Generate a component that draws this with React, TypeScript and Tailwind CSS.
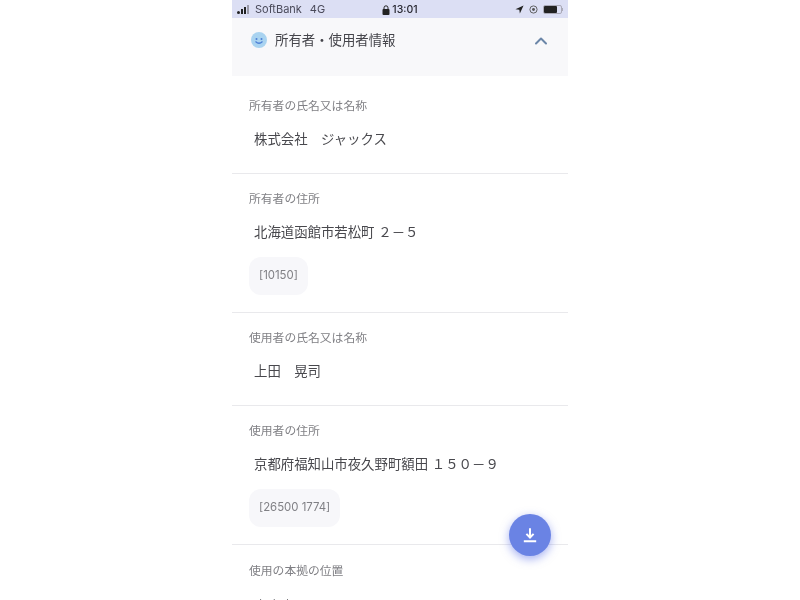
import { ChevronUp } from "lucide-react";

const font = "font-['Inter','Noto_Sans_CJK_JP',sans-serif]";

type FieldProps = {
  label: string;
  value: string;
  code?: string;
  box: string;
  border?: boolean;
};

function Field({ label, value, code, box, border = true }: FieldProps) {
  return (
    <div className={`${box} pl-[17px] ${border ? "border-b border-[#e9e9ec]" : ""}`}>
      <div className="text-[11.8px] leading-[16px] text-[#808085]">{label}</div>
      <div className="mt-[15px] pl-[5px] text-[13.4px] leading-[20px] text-[#48484d]">{value}</div>
      {code && (
        <div className="mt-[15px] flex h-[38px] w-fit items-center rounded-[12px] bg-[#f7f7fa] px-[10px] text-[11.4px] text-[#808085]">
          {code}
        </div>
      )}
    </div>
  );
}

function StatusBar() {
  return (
    <div className="flex h-[18px] items-center justify-between bg-[#dcdff4] px-[5px] pt-[1px] text-[11px] text-[#4a4a5a]">
      <div className="flex w-[110px] items-center gap-[3px]">
        <div className="flex items-end gap-[1px] pr-[3px]">
          <span className="h-[3px] w-[3px] rounded-full bg-[#222]" />
          <span className="h-[5px] w-[2px] bg-[#222]" />
          <span className="h-[7px] w-[2px] bg-[#222]" />
          <span className="h-[9px] w-[2px] bg-[#9a9aa8]" />
        </div>
        <span>SoftBank</span>
        <span className="ml-[5px]">4G</span>
      </div>
      <div className="flex items-center gap-[2px] text-[10.5px] font-medium text-[#25252e]">
        <svg width="8" height="10" viewBox="0 0 8 10">
          <rect x="0.5" y="4" width="7" height="6" rx="1" fill="#222" />
          <path d="M2 4.5V2.8a2 2 0 0 1 4 0V4.5" fill="none" stroke="#222" strokeWidth="1" />
        </svg>
        <span>13:01</span>
      </div>
      <div className="flex w-[110px] items-center justify-end gap-[5px]">
        <svg width="9" height="9" viewBox="0 0 10 10">
          <path d="M9.5 0.5 L0.5 4.6 L4.8 5.2 L5.4 9.5 Z" fill="#222" />
        </svg>
        <svg width="9" height="9" viewBox="0 0 10 10">
          <circle cx="5" cy="5" r="4" fill="none" stroke="#555" strokeWidth="1" />
          <circle cx="5" cy="5" r="1.6" fill="#555" />
        </svg>
        <div className="flex items-center">
          <div className="flex h-[9px] w-[19px] rounded-[2px] border border-[#aaaab8]">
            <div className="h-full w-[13px] rounded-[1px] bg-[#222]" />
          </div>
          <span className="h-[3px] w-[1px] bg-[#aaaab8]" />
        </div>
      </div>
    </div>
  );
}

export default function App() {
  return (
    <div className={`${font} flex h-[600px] w-[800px] justify-center overflow-hidden bg-white`}>
      <div className="relative h-[600px] w-[336px] overflow-hidden bg-white blur-[0.4px]">
        <StatusBar />
        <div className="flex h-[58px] items-start justify-between bg-[#f8f8fa] pl-[19px] pr-[17px] pt-[13px]">
          <div className="flex items-center gap-[8px]">
            <svg width="16" height="16" viewBox="0 0 16 16">
              <circle cx="8" cy="8" r="8" fill="#a9d3f0" />
              <circle cx="5.5" cy="7" r="1" fill="#4c7fd6" />
              <circle cx="10.5" cy="7" r="1" fill="#4c7fd6" />
              <path d="M4.5 9.5 Q8 13 11.5 9.5" fill="none" stroke="#4c7fd6" strokeWidth="1.2" />
            </svg>
            <span className="text-[13.4px] leading-[18px] text-[#45454b]">所有者・使用者情報</span>
          </div>
          <ChevronUp className="h-[20px] w-[20px] text-[#6b86a8]" strokeWidth={2.4} />
        </div>
        <Field label="所有者の氏名又は名称" value="株式会社　ジャックス" box="h-[98px] pt-[22px]" />
        <Field label="所有者の住所" value="北海道函館市若松町 ２－５" code="[10150]" box="h-[139px] pt-[17px]" />
        <Field label="使用者の氏名又は名称" value="上田　晃司" box="h-[93px] pt-[17px]" />
        <Field label="使用者の住所" value="京都府福知山市夜久野町額田 １５０－９" code="[26500 1774]" box="h-[139px] pt-[17px]" />
        <Field label="使用の本拠の位置" value="＊＊＊" box="h-[60px] pt-[18px]" border={false} />
        <button className="absolute left-[277px] top-[514px] flex h-[42px] w-[42px] items-center justify-center rounded-full bg-[#6a83e4] shadow-[0_3px_10px_rgba(90,110,230,0.55)]">
          <svg width="18" height="18" viewBox="0 0 16 16" fill="none" stroke="#fff" strokeWidth="1.8">
            <path d="M8 2v8M4.8 7L8 10.2 11.2 7M2.5 13.5h11" />
          </svg>
        </button>
      </div>
    </div>
  );
}
